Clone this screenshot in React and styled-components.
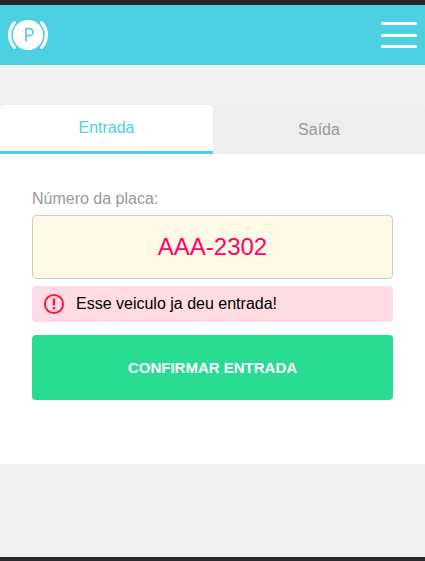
import React from "react";
import styled, { createGlobalStyle } from "styled-components";

const GlobalStyle = createGlobalStyle`
  * { box-sizing: border-box; }
  body {
    margin: 0;
    background: #f1f1f1;
    font-family: "Liberation Sans", Arial, sans-serif;
    font-size: 16px;
  }
`;

const Screen = styled.div`
  display: flex;
  flex-direction: column;
  height: 561px;
  overflow: hidden;
  border-top: 5px solid #252528;
  border-bottom: 4px solid #29282d;
`;

const Header = styled.header`
  display: flex;
  justify-content: space-between;
  align-items: center;
  flex: none;
  height: 60px;
  padding: 0 8px;
  background: #4dd0e1;
`;

const Logo = styled.svg`
  display: block;
  width: 40px;
  height: 32px;
`;

const MenuButton = styled.button`
  display: flex;
  flex-direction: column;
  justify-content: space-between;
  width: 36px;
  height: 26px;
  padding: 0;
  border: 0;
  background: none;
`;

const MenuBar = styled.span`
  display: block;
  height: 3px;
  border-radius: 2px;
  background: #fff;
`;

const Tabs = styled.nav`
  display: grid;
  grid-template-columns: 213px 1fr;
  flex: none;
  height: 49px;
  margin-top: 40px;
`;

const Tab = styled.button`
  display: flex;
  align-items: center;
  justify-content: center;
  padding: 0;
  border: 0;
  border-bottom: ${(p) => (p.$active ? "3px solid #4dd0e1" : "0")};
  border-radius: 4px 4px 0 0;
  background: ${(p) => (p.$active ? "#fff" : "#eee")};
  color: ${(p) => (p.$active ? "#4dd0e1" : "#999")};
  font: inherit;
`;

const Panel = styled.form`
  display: flex;
  flex-direction: column;
  flex: none;
  height: 310px;
  padding: 35px 32px 0;
  background: #fff;
`;

const Label = styled.label`
  height: 26px;
  line-height: 20px;
  color: #999;
`;

const PlateInput = styled.input`
  width: 100%;
  height: 64px;
  padding: 0;
  border: 1px solid #ccc;
  border-radius: 4px;
  outline: 0;
  background: #fff9e6;
  color: #ff0066;
  font: 24px "Liberation Sans", Arial, sans-serif;
  text-align: center;
`;

const Alert = styled.div`
  display: flex;
  align-items: center;
  gap: 11px;
  height: 36px;
  margin-top: 7px;
  padding-left: 11px;
  border-radius: 4px;
  background: #ffdbe3;
  color: #000;
`;

const AlertIcon = styled.svg`
  display: block;
  width: 22px;
  height: 22px;
`;

const SubmitButton = styled.button`
  height: 65px;
  margin-top: 13px;
  border: 0;
  border-radius: 4px;
  background: #28dd92;
  color: #fff;
  font: bold 15px "Liberation Sans", Arial, sans-serif;
  text-transform: uppercase;
`;

export default function App() {
  return (
    <>
      <GlobalStyle />
      <Screen>
        <Header>
          <Logo viewBox="0 0 40 32" fill="none">
            <circle cx="20" cy="16" r="15.1" fill="#fff" />
            <path
              d="M18 22.5V9.6h3.4a3.4 3.4 0 0 1 0 7.1H18"
              stroke="#4dd0e1"
              strokeWidth="1.7"
            />
            <path
              d="M6.3 3.8a18.2 18.2 0 0 0 0 24.4M33.7 3.8a18.2 18.2 0 0 1 0 24.4"
              stroke="#fff"
              strokeWidth="3.2"
              strokeLinecap="round"
            />
          </Logo>
          <MenuButton type="button" aria-label="Menu">
            <MenuBar />
            <MenuBar />
            <MenuBar />
          </MenuButton>
        </Header>
        <Tabs>
          <Tab type="button" $active>Entrada</Tab>
          <Tab type="button">Saída</Tab>
        </Tabs>
        <Panel>
          <Label htmlFor="plate">Número da placa:</Label>
          <PlateInput id="plate" defaultValue="AAA-2302" />
          <Alert role="alert">
            <AlertIcon viewBox="0 0 22 22" fill="none">
              <circle cx="11" cy="11" r="9.1" stroke="#ff1744" strokeWidth="2" />
              <path d="M9.8 5.5h2.4v7H9.8zM9.8 14h2.4v2.3H9.8z" fill="#ff1744" />
            </AlertIcon>
            Esse veiculo ja deu entrada!
          </Alert>
          <SubmitButton type="button">Confirmar entrada</SubmitButton>
        </Panel>
      </Screen>
    </>
  );
}
